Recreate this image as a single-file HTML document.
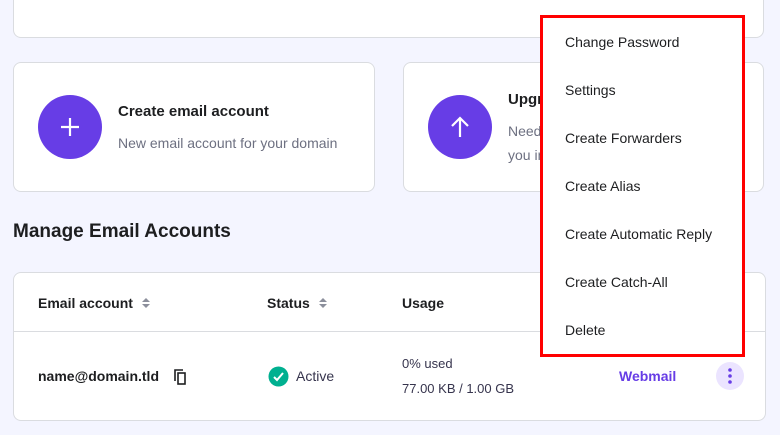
<!DOCTYPE html><html><head><style>
body{margin:0;width:780px;height:435px;background:#f4f5ff;font-family:"Liberation Sans",sans-serif;position:relative;overflow:hidden;color:#1d1e20}
.card{position:absolute;background:#fff;border:1px solid #dadce0;border-radius:8px;box-sizing:border-box}
.circ{position:absolute;width:64px;height:64px;border-radius:50%;background:#673de6}
.t{position:absolute;font-size:15px;font-weight:bold;white-space:nowrap}
.s{position:absolute;font-size:14px;color:#6d7081;white-space:nowrap}
.a{position:absolute;white-space:nowrap;font-size:14px}
.menu{position:absolute;left:540px;top:15px;width:205px;height:342px;border:3px solid #f00;background:#fff;box-sizing:border-box}
.menu div{position:absolute;left:22px;font-size:14px;color:#1d1e20;white-space:nowrap}
</style></head><body>
<div class="card" style="left:13px;top:-10px;width:751px;height:48px"></div>
<div class="card" style="left:13px;top:62px;width:362px;height:130px"></div>
<div class="circ" style="left:38px;top:95px"><svg width="64" height="64"><path d="M32 23v18M23 32h18" stroke="#fff" stroke-width="2.2"/></svg></div>
<div class="t" style="left:118px;top:103px">Create email account</div>
<div class="s" style="left:118px;top:135px">New email account for your domain</div>
<div class="card" style="left:403px;top:62px;width:361px;height:130px"></div>
<div class="circ" style="left:428px;top:95px"><svg width="64" height="64"><path d="M32 42V23M24 31l8-8 8 8" stroke="#fff" stroke-width="2.2" fill="none"/></svg></div>
<div class="t" style="left:508px;top:91px">Upgrade</div>
<div class="s" style="left:508px;top:123px">Need more</div>
<div class="s" style="left:508px;top:147px">you in</div>
<div class="t" style="left:13px;top:221px;font-size:19px">Manage Email Accounts</div>
<div class="card" style="left:13px;top:272px;width:753px;height:149px"></div>
<div style="position:absolute;left:14px;top:331px;width:751px;height:1px;background:#dadce0"></div>
<div class="a" style="left:38px;top:295px;font-weight:bold">Email account</div>
<svg style="position:absolute;left:141px;top:297px" width="10" height="12"><path d="M1 5l4-4 4 4zM1 7l4 4 4-4z" fill="#8c8f9c"/></svg>
<div class="a" style="left:267px;top:295px;font-weight:bold">Status</div>
<svg style="position:absolute;left:318px;top:297px" width="10" height="12"><path d="M1 5l4-4 4 4zM1 7l4 4 4-4z" fill="#8c8f9c"/></svg>
<div class="a" style="left:402px;top:295px;font-weight:bold">Usage</div>
<div class="a" style="left:38px;top:368px;font-weight:bold">name@domain.tld</div>
<svg style="position:absolute;left:172px;top:368px" width="16" height="18"><rect x="6" y="5" width="7" height="11" stroke="#1d1e20" stroke-width="1.6" fill="none"/><path d="M3 13V2h8" stroke="#1d1e20" stroke-width="1.6" fill="none"/></svg>
<svg style="position:absolute;left:268px;top:366px" width="21" height="21"><circle cx="10.5" cy="10.5" r="10" fill="#00b090"/><path d="M6 11l3 3 6-7" stroke="#fff" stroke-width="2" fill="none"/></svg>
<div class="a" style="left:296px;top:368px;color:#36344d">Active</div>
<div class="a" style="left:402px;top:356px;font-size:13px;color:#36344d">0% used</div>
<div class="a" style="left:402px;top:381px;font-size:13px;color:#36344d">77.00 KB / 1.00 GB</div>
<div class="a" style="left:619px;top:368px;font-weight:bold;color:#673de6">Webmail</div>
<div style="position:absolute;left:716px;top:362px;width:28px;height:28px;border-radius:50%;background:#ebe4ff"><svg width="28" height="28"><circle cx="14" cy="8" r="1.8" fill="#673de6"/><circle cx="14" cy="14" r="1.8" fill="#673de6"/><circle cx="14" cy="20" r="1.8" fill="#673de6"/></svg></div>
<div class="menu">
<div style="top:16px">Change Password</div>
<div style="top:64px">Settings</div>
<div style="top:112px">Create Forwarders</div>
<div style="top:160px">Create Alias</div>
<div style="top:208px">Create Automatic Reply</div>
<div style="top:256px">Create Catch-All</div>
<div style="top:304px">Delete</div>
</div>
</body></html>
